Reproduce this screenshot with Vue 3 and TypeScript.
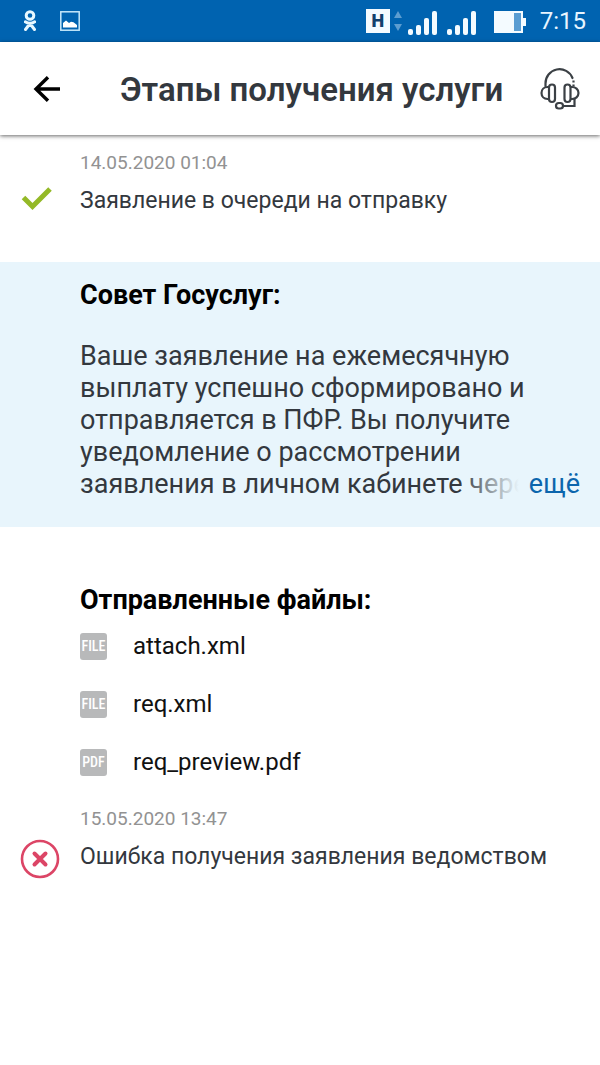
<script setup lang="ts">
interface SentFile {
  name: string
  kind: string
}

const files: SentFile[] = [
  { name: 'attach.xml', kind: 'FILE' },
  { name: 'req.xml', kind: 'FILE' },
  { name: 'req_preview.pdf', kind: 'PDF' },
]
</script>

<template>
  <div class="screen">
    <div class="status-bar">
      <div class="status-left">
        <svg width="12" height="22" viewBox="0 0 12 22" fill="none" stroke="#e8f8ff" stroke-width="3">
          <circle cx="6" cy="5.5" r="3.8" />
          <path d="M1.3 11.8Q6 15 10.7 11.8M6 13.5L1.5 19.5M6 13.5L10.5 19.5" stroke-linecap="round" />
        </svg>
        <svg width="20" height="20" viewBox="0 0 20 20">
          <rect x="0.8" y="0.8" width="18.4" height="18.4" fill="none" stroke="#c5e8fb" stroke-width="1.5" />
          <path d="M3 16.5V12l3-2.5 3 2.5 2-1.2 2.5.5L17 14v2.5z" fill="#fff" />
        </svg>
      </div>
      <div class="status-right">
        <span class="network">H</span>
        <svg class="arrows" width="8" height="20" viewBox="0 0 8 20" fill="#5c9dd0">
          <path d="M4 0l4 7H0zM4 20l4-7H0z" />
        </svg>
        <svg v-for="n in 2" :key="n" class="signal" width="29" height="24" viewBox="0 0 29 24" fill="#f4fbff">
          <rect x="0" y="18" width="5" height="6" rx="2" />
          <rect x="8" y="14" width="5" height="10" rx="2" />
          <rect x="16" y="7" width="5" height="17" rx="2" />
          <rect x="24" y="0" width="5" height="24" rx="2" />
        </svg>
        <svg class="battery" width="32" height="22" viewBox="0 0 32 22">
          <path d="M0 0h29v7h3v8h-3v7H0z" fill="#f4fbff" />
          <rect x="20" y="2" width="7" height="18" fill="#5a9dd2" />
        </svg>
        <span class="clock">7:15</span>
      </div>
    </div>

    <header class="app-bar">
      <button class="icon-button" type="button" aria-label="Назад">
        <svg width="28" height="26" viewBox="0 0 28 26" fill="none" stroke="#000" stroke-width="3.4">
          <path d="M28 13H4M16 1.2L4 13l12 11.8" />
        </svg>
      </button>
      <h1>Этапы получения услуги</h1>
      <button class="icon-button" type="button" aria-label="Поддержка">
        <svg width="40" height="44" viewBox="0 0 40 44" fill="none" stroke="#3b4045" stroke-width="2.2">
          <path d="M5.500 19V16.500a14 14 0 0 1 27-5.500" stroke-linecap="round" />
          <path d="M33.500 13.500v2M33.500 17.500v2" />
          <rect x="9" y="17.500" width="6" height="17.500" rx="3" />
          <rect x="24.500" y="17.500" width="6" height="17.500" rx="3" />
          <path d="M9 20H7.500C4 20 1.500 22.500 1.500 26S4 32 7.500 32H9M30.500 20H32c3.500 0 6.500 2.500 6.500 6s-3 6-6.500 6h-1.500" />
          <path d="M34.500 31.500V39H23" />
          <rect x="16" y="36" width="7" height="5.500" rx="2.750" />
        </svg>
      </button>
    </header>

    <main>
      <section class="stage">
        <time>14.05.2020 01:04</time>
        <div class="stage-row">
          <svg class="stage-icon" width="40" height="40" viewBox="0 0 40 40" fill="none" stroke="#94b927" stroke-width="5">
            <path d="M3.500 18.500l9 9L30 10" />
          </svg>
          <p>Заявление в очереди на отправку</p>
        </div>
      </section>

      <section class="advice">
        <h2>Совет Госуслуг:</h2>
        <div class="advice-text">
          <p>Ваше заявление на ежемесячную выплату успешно сформировано и отправляется в ПФР. Вы получите уведомление о рассмотрении заявления в личном кабинете чере</p>
          <button class="more" type="button">ещё</button>
        </div>
      </section>

      <section class="files">
        <h2>Отправленные файлы:</h2>
        <ul>
          <li v-for="file in files" :key="file.name">
            <span class="badge">{{ file.kind }}</span>
            <a href="#">{{ file.name }}</a>
          </li>
        </ul>
      </section>

      <section class="stage failed">
        <time>15.05.2020 13:47</time>
        <div class="stage-row">
          <svg class="stage-icon" width="40" height="40" viewBox="0 0 40 40" fill="none" stroke="#dc4566">
            <circle cx="20" cy="20" r="18" stroke-width="2.600" />
            <path d="M14.500 14.500l11 11M25.500 14.500l-11 11" stroke-width="4" stroke-linecap="round" />
          </svg>
          <p>Ошибка получения заявления ведомством</p>
        </div>
      </section>
    </main>
  </div>
</template>

<style>
body {
  background: #fff;
}
</style>

<style scoped>
.screen {
  min-height: 100vh;
  background: #fff;
  font-family: Roboto, "Noto Sans", sans-serif;
  color: #33383e;
}
h1,
h2,
p,
ul {
  margin: 0;
  padding: 0;
}
button {
  border: 0;
  padding: 0;
  background: none;
  font-family: inherit;
  cursor: pointer;
}
svg {
  display: block;
  flex: none;
}
.status-bar {
  display: flex;
  justify-content: space-between;
  align-items: center;
  height: 42px;
  padding: 0 14px 0 24px;
  background: #0063b0;
}
.status-left,
.status-right {
  display: flex;
  align-items: center;
}
.status-left {
  gap: 24px;
}
.network {
  width: 24px;
  height: 24px;
  background: #f4fbff;
  color: #12406c;
  font-size: 18px;
  font-weight: 900;
  line-height: 24px;
  text-align: center;
}
.arrows {
  margin-left: 4px;
}
.signal {
  margin: 4px 0 0 6px;
}
.signal + .signal {
  margin-left: 10px;
}
.battery {
  margin: 2px 14px 0 18px;
}
.clock {
  color: #e8f5ff;
  font-size: 24px;
  line-height: 28px;
}
.app-bar {
  display: flex;
  align-items: center;
  height: 93px;
  padding: 0 20px 0 32px;
  box-shadow: 0 1px 4px rgba(0, 0, 0, 0.6);
}
h1 {
  flex: 1;
  padding: 2px 0 0 60px;
  font-size: 33px;
  font-weight: 600;
  line-height: 40px;
  white-space: nowrap;
}
.stage {
  padding: 16px 20px 0;
}
time {
  display: block;
  padding-left: 60px;
  color: #929292;
  font-size: 19px;
  line-height: 24px;
}
.stage-row {
  display: flex;
  align-items: center;
  gap: 20px;
  min-height: 48px;
}
.stage-row p {
  padding-top: 3px;
  font-size: 23px;
  line-height: 28px;
}
.failed .stage-icon {
  margin-top: 8px;
}
.advice {
  margin-top: 39px;
  padding: 17px 20px 27px 80px;
  background: #e8f5fc;
}
h2 {
  color: #000;
  font-size: 27px;
  font-weight: 700;
  line-height: 32px;
}
.advice-text {
  position: relative;
  margin-top: 29px;
  font-size: 27px;
  line-height: 32px;
}
.more {
  position: absolute;
  right: 0;
  bottom: 0;
  padding-left: 70px;
  background: linear-gradient(to right, rgba(232, 245, 252, 0), #e8f5fc 60px);
  color: #0b65ad;
  font-size: 27px;
  line-height: 32px;
}
.files {
  padding: 57px 20px 0 80px;
}
ul {
  padding-top: 1px;
  list-style: none;
}
li {
  display: flex;
  align-items: center;
  gap: 26px;
  height: 58px;
}
.badge {
  width: 27px;
  height: 27px;
  border-radius: 3px;
  background: #b8b9ba;
  color: #fff;
  font-family: "Roboto Condensed", "Liberation Sans Narrow", Roboto, sans-serif;
  font-size: 14px;
  font-weight: 500;
  line-height: 27px;
  text-align: center;
}
li a {
  color: #111;
  font-size: 24px;
  line-height: 28px;
  text-decoration: none;
}
</style>
